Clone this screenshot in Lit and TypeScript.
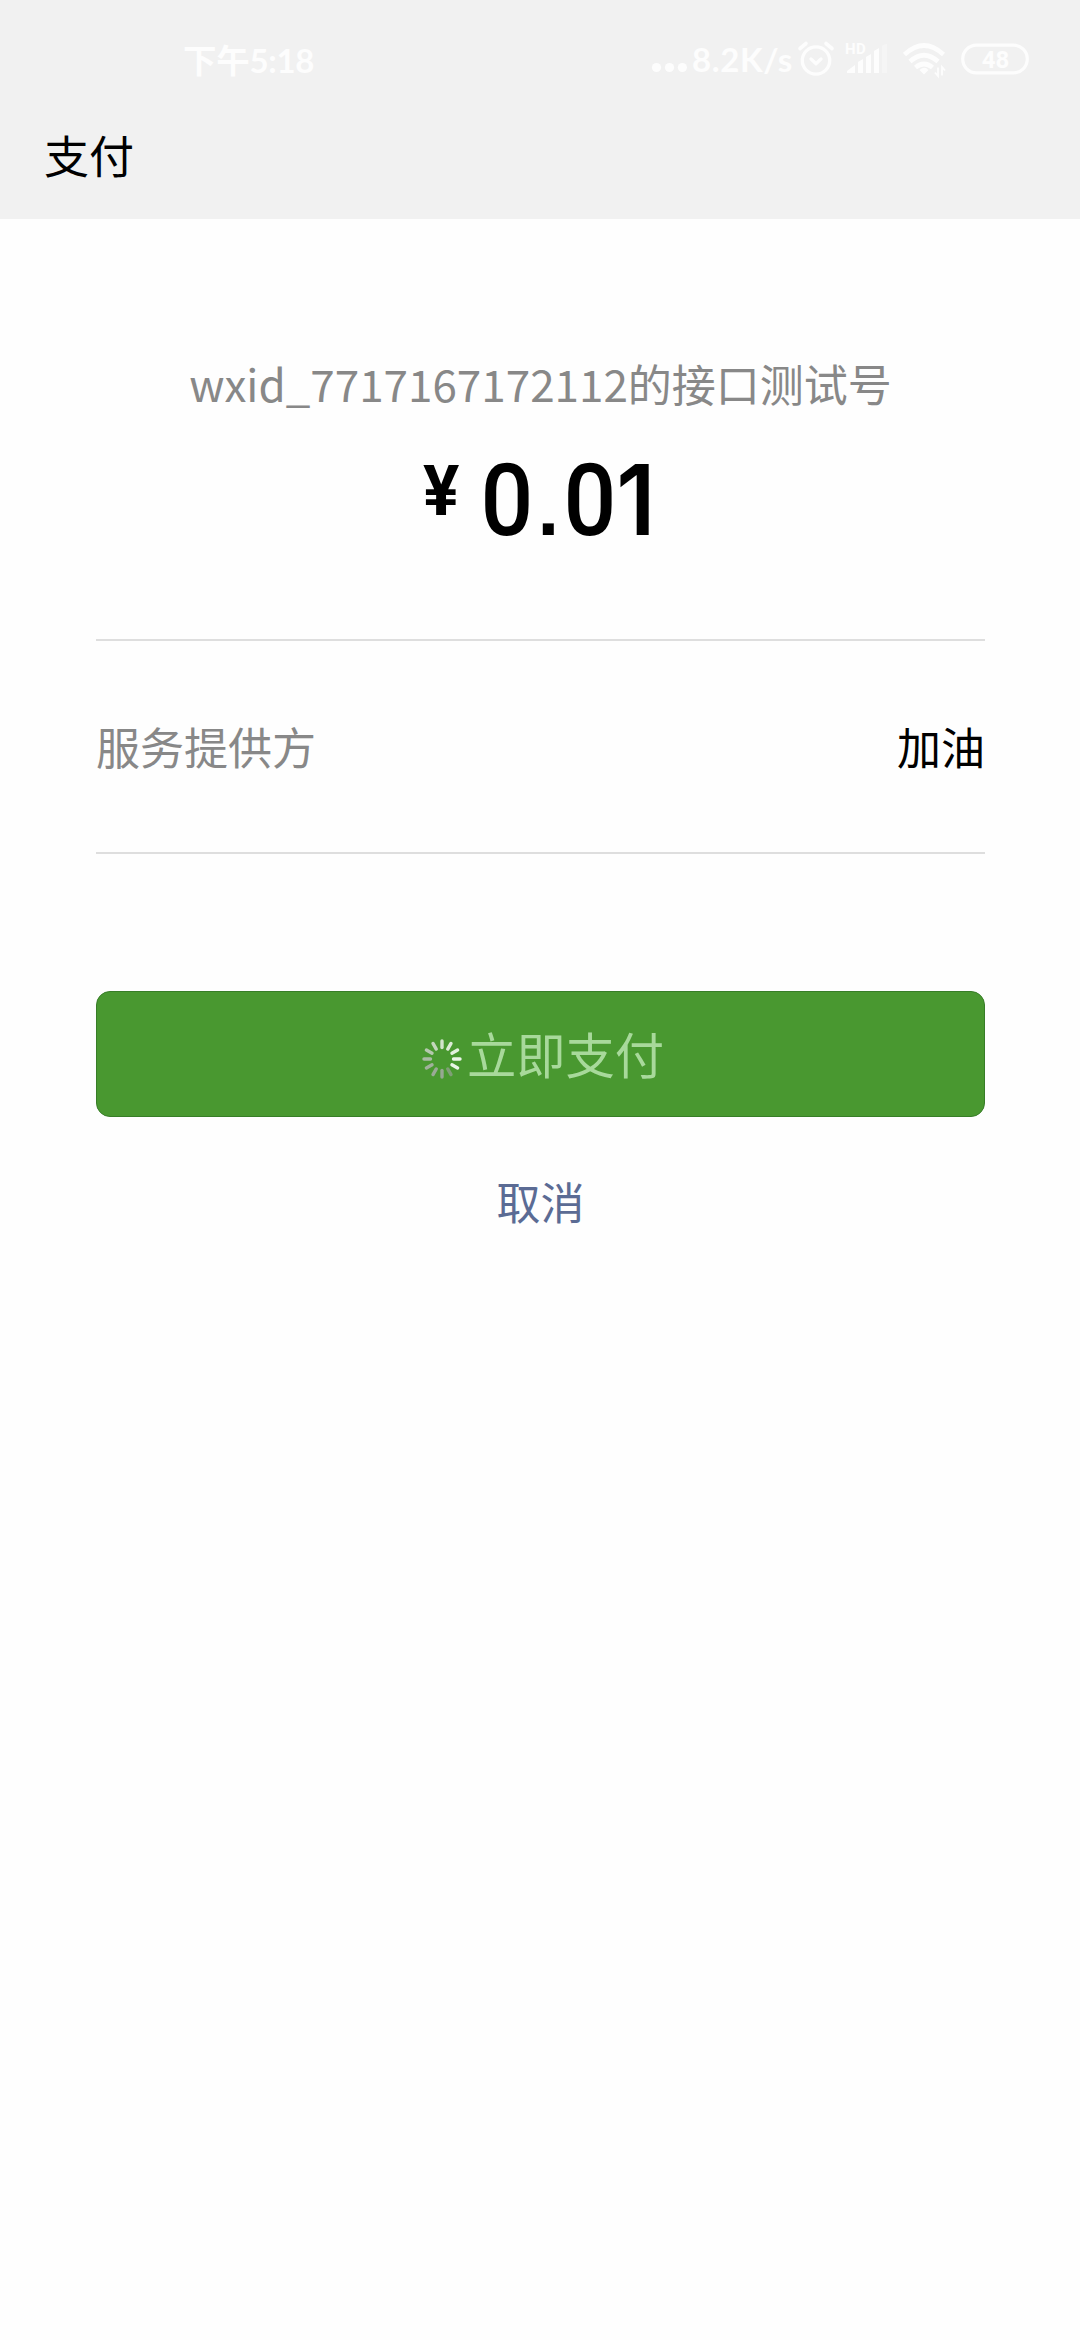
import { LitElement, html, css, svg } from "lit";
import { customElement } from "lit/decorators.js";

const SPINNER_TONES = [
  "#d3e4cc", "#dcebd6", "#e3f0de", "#ebf5e8", "#e9f5e5", "#7f9f76",
  "#96a892", "#9aaa96", "#a0b19b", "#a9bba4", "#b5c8ae", "#c2d6bb",
];

@customElement("status-bar")
export class StatusBar extends LitElement {
  static styles = css`
    :host {
      display: flex;
      justify-content: space-between;
      align-items: center;
      height: 118px;
      padding: 0 50px 0 183px;
      box-sizing: border-box;
      color: #fdfdfd;
      font-family: Lato, "Noto Sans CJK SC", sans-serif;
      font-weight: 700;
    }
    .time { display: flex; align-items: baseline; line-height: 60px; font-size: 33px; letter-spacing: -0.3px; }
    .period { font-family: "Noto Sans CJK SC", sans-serif; font-weight: 700; font-size: 33.5px; }
    .right { display: flex; align-items: center; }
    .speed { margin-left: 5px; width: 104px; font-size: 33px; letter-spacing: 0.6px; line-height: 60px; white-space: nowrap; }
    svg { display: block; flex: none; }
    .hd { font-family: Roboto, sans-serif; font-weight: 700; font-size: 15px; letter-spacing: 0.5px; }
    .battery-level { font-family: Roboto, sans-serif; font-weight: 700; font-size: 24px; }
  `;

  render() {
    return html`
      <div class="time"><span class="period">下午</span><span>5:18</span></div>
      <div class="right">
        <svg width="36" height="60" viewBox="651 30 36 60" fill="currentColor">
          <circle cx="656.5" cy="68.5" r="4.6" /><circle cx="669.5" cy="68.5" r="4.6" /><circle cx="682.4" cy="68.5" r="4.6" />
        </svg>
        <span class="speed">8.2K/s</span>
        <svg width="41" height="60" viewBox="796 29.5 41 60" fill="none" stroke="currentColor" stroke-width="3.3" stroke-linecap="round" stroke-linejoin="round">
          <circle cx="816" cy="61" r="13.7" />
          <path d="M811 59.5l5 4.7 5-4.7" />
          <path d="M800 49l6-5M832 49l-6-5" stroke-width="3.6" />
        </svg>
        <svg width="66" height="60" viewBox="837 29 66 60" fill="currentColor">
          <text class="hd" x="845" y="54">HD</text>
          <path d="M847 73v-2l8-6v8zM858 73V62l5-3v14zM866 73V57l5-3v19zM874 73V51l5-3v25z" />
          <path d="M882 73V45.500l5-2V73z" opacity=".35" />
        </svg>
        <svg width="58" height="60" viewBox="903 29 58 60" fill="none" stroke="currentColor" stroke-width="4.6">
          <path d="M904.500 54.500Q924 36.500 943.500 54.500M910 61.500Q924 49 938 61.500M915.500 67.500Q924 60.500 932.500 67.500" />
          <path d="M919.500 70q5-4.500 9 0l-4.500 4.500z" fill="currentColor" stroke="none" />
          <path d="M938 67.500v8.500l-3-3.500M942 75.500V67l3 3.500" stroke-width="1.800" />
        </svg>
        <svg width="69" height="60" viewBox="961 29 69 60" fill="none">
          <rect x="962.700" y="45.200" width="64.600" height="27.600" rx="13.800" stroke="currentColor" stroke-width="3.200" />
          <text class="battery-level" x="995.500" y="67.500" text-anchor="middle" fill="currentColor">48</text>
        </svg>
      </div>
    `;
  }
}

@customElement("loading-spinner")
export class LoadingSpinner extends LitElement {
  static styles = css`
    :host { display: block; width: 40px; height: 40px; }
    svg { display: block; }
  `;

  render() {
    return html`
      <svg width="40" height="40" viewBox="-20 -20 40 40" stroke-width="3.4" stroke-linecap="round">
        ${SPINNER_TONES.map((tone, i) => svg`<path d="M0 -11.500V-18" stroke=${tone} transform="rotate(${i * 30})" />`)}
      </svg>
    `;
  }
}

@customElement("app-root")
export class AppRoot extends LitElement {
  static styles = css`
    :host {
      display: block;
      height: 2340px;
      background: #fefefe;
      color: #000;
      font-family: "Noto Sans CJK SC", sans-serif;
      font-size: 44px;
    }
    .header { height: 219px; background: #f1f1f1; }
    .title { margin: 0; padding-left: 44px; font-size: 45px; font-weight: 400; line-height: 74px; }
    .content { padding: 131px 95px 0 96px; }
    .payee { line-height: 66px; text-align: center; color: #888; white-space: nowrap; }
    .amount {
      display: flex;
      justify-content: center;
      align-items: flex-start;
      height: 199px;
      padding-top: 24px;
    }
    .amount svg { display: block; }
    .currency { font-family: Roboto, sans-serif; font-size: 70px; font-weight: 700; }
    .zero { font-family: Roboto, sans-serif; font-size: 100px; font-weight: 500; }
    .point { font-family: "Liberation Sans", sans-serif; font-size: 78px; font-weight: 700; }
    .one { font-family: Inter, sans-serif; font-size: 97.6px; font-weight: 600; }
    .row {
      display: flex;
      justify-content: space-between;
      align-items: center;
      height: 209px;
      padding-bottom: 2px;
      border-top: 2px solid #dedede;
      border-bottom: 2px solid #dedede;
    }
    .label { color: #888; }
    .pay {
      display: flex;
      align-items: center;
      justify-content: center;
      width: 100%;
      height: 126px;
      margin: 137px 0 0;
      padding: 0 0 2px 5px;
      border: 1px solid #377d27;
      border-radius: 14px;
      background: #499830;
      color: #a8d99b;
      font-family: inherit;
      font-size: 49.3px;
      line-height: 70px;
    }
    .pay loading-spinner { margin: 11px 5px 0 0; }
    .cancel { display: block; margin-top: 51px; text-align: center; line-height: 66px; color: #5b6b94; text-decoration: none; }
  `;

  render() {
    return html`
      <header class="header">
        <status-bar></status-bar>
        <h1 class="title">支付</h1>
      </header>
      <main class="content">
        <div class="payee">wxid_7717167172112的接口测试号</div>
        <div class="amount">
          <svg width="260" height="120" viewBox="410 440 260 120">
            <text class="currency" transform="translate(422 514.500) scale(.97 1)">¥</text>
            <text class="zero" transform="translate(479.500 535) scale(.93 1)">0</text>
            <text class="point" transform="translate(536.500 535)">.</text>
            <text class="zero" transform="translate(562.500 535) scale(.93 1)">0</text>
            <text class="one" transform="translate(615.300 535) scale(.95 1)">1</text>
          </svg>
        </div>
        <div class="row"><span class="label">服务提供方</span><span>加油</span></div>
        <button class="pay"><loading-spinner></loading-spinner><span>立即支付</span></button>
        <a class="cancel">取消</a>
      </main>
    `;
  }
}
